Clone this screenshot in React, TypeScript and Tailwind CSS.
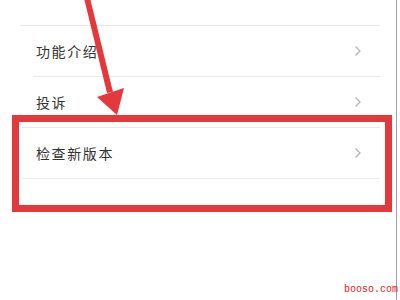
import React from "react";

const rows = [
  { label: "功能介绍", line: "ml-[20px] w-[360px]" },
  { label: "投诉", line: "ml-[33px] w-[347px]" },
  { label: "检查新版本", line: "ml-[22px] w-[358px]" },
];

const Chevron = () => (
  <svg width="8" height="12" viewBox="0 0 8 12" fill="none" className="shrink-0">
    <path d="M1.5 1.5 L6 6 L1.5 10.5" stroke="#b5b5b5" strokeWidth="1.3" />
  </svg>
);

export default function App() {
  return (
    <div className="relative w-[400px] h-[300px] bg-white overflow-hidden font-['Noto_Sans_CJK_SC',sans-serif]">
      <div className="w-[397px] h-full border-r border-[#a0a0a0] pt-[25px]">
        {rows.map((row) => (
          <div key={row.label}>
            <div className={`${row.line} h-px bg-[#e8e8e8]`} />
            <div className="w-[380px] h-[50px] flex items-center justify-between pl-[36px] pr-[18px]">
              <span className="text-[14px] tracking-[1.6px] text-[#333] leading-none">
                {row.label}
              </span>
              <Chevron />
            </div>
          </div>
        ))}
        <div className="ml-[22px] w-[358px] h-px bg-[#ececec]" />
      </div>

      {/* highlight box */}
      <div className="absolute left-[12px] top-[115px] w-[380px] h-[97px] border-[7px] border-[#e3393d]" />

      {/* arrow */}
      <svg className="absolute left-0 top-0" width="400" height="300" viewBox="0 0 400 300">
        <path d="M84 -2 L90 -2 L113 92 L107 93 Z" fill="#e3393d" />
        <path d="M97 97 L124 88 L117 115 Z" fill="#e3393d" />
      </svg>

      <span className="absolute right-[2px] top-[285px] text-[10px] leading-none text-[#e0201e] font-['Liberation_Mono',monospace] whitespace-nowrap">
        booso.com
      </span>
    </div>
  );
}
